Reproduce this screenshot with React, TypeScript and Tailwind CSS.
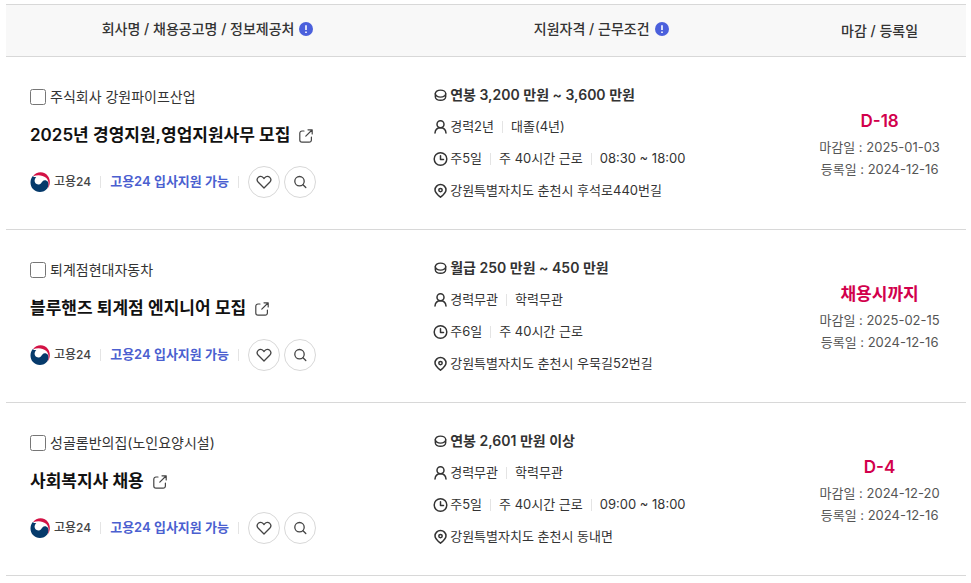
import type { ReactNode } from "react";

type Job = {
  id: string;
  company: string;
  title: string;
  pay: string;
  career: string[];
  hours: string[];
  place: string;
  due: string;
  closes: string;
  posted: string;
};

const jobs: Job[] = [
  {
    id: "job-1",
    company: "주식회사 강원파이프산업",
    title: "2025년 경영지원,영업지원사무 모집",
    pay: "연봉 3,200 만원 ~ 3,600 만원",
    career: ["경력2년", "대졸(4년)"],
    hours: ["주5일", "주 40시간 근로", "08:30 ~ 18:00"],
    place: "강원특별자치도 춘천시 후석로440번길",
    due: "D-18",
    closes: "2025-01-03",
    posted: "2024-12-16",
  },
  {
    id: "job-2",
    company: "퇴계점현대자동차",
    title: "블루핸즈 퇴계점 엔지니어 모집",
    pay: "월급 250 만원 ~ 450 만원",
    career: ["경력무관", "학력무관"],
    hours: ["주6일", "주 40시간 근로"],
    place: "강원특별자치도 춘천시 우묵길52번길",
    due: "채용시까지",
    closes: "2025-02-15",
    posted: "2024-12-16",
  },
  {
    id: "job-3",
    company: "성골롬반의집(노인요양시설)",
    title: "사회복지사 채용",
    pay: "연봉 2,601 만원 이상",
    career: ["경력무관", "학력무관"],
    hours: ["주5일", "주 40시간 근로", "09:00 ~ 18:00"],
    place: "강원특별자치도 춘천시 동내면",
    due: "D-4",
    closes: "2024-12-20",
    posted: "2024-12-16",
  },
];

function Icon({ width, children }: { width: string; children: ReactNode }) {
  return (
    <svg
      viewBox="0 0 16 16"
      className="size-4 shrink-0"
      fill="none"
      stroke="currentColor"
      strokeWidth={width}
      strokeLinecap="round"
      strokeLinejoin="round"
      aria-hidden="true"
    >
      {children}
    </svg>
  );
}

function CoinIcon() {
  return (
    <Icon width="1.4">
      <ellipse cx="7.500" cy="6.600" rx="5.200" ry="3.500" />
      <path d="M2.300 6.800v3c0 2 2.300 3.500 5.200 3.500s5.200-1.500 5.200-3.500v-3" />
    </Icon>
  );
}

function PersonIcon() {
  return (
    <Icon width="1.5">
      <circle cx="7.500" cy="5.200" r="3.500" />
      <path d="M2 14c.3-3.200 2.400-5.200 5.500-5.200s5.200 2 5.500 5.200" />
    </Icon>
  );
}

function ClockIcon() {
  return (
    <Icon width="1.5">
      <circle cx="7.500" cy="8" r="6.300" />
      <path d="M7.500 4.800V8.400h3" />
    </Icon>
  );
}

function PinIcon() {
  return (
    <Icon width="1.5">
      <path d="M7.500 14.200c3-2.400 5.500-4.400 5.500-7.200a5.500 5.500 0 0 0-11 0c0 2.800 2.500 4.800 5.500 7.200Z" />
      <circle cx="7.500" cy="7.100" r="1.700" />
    </Icon>
  );
}

function OpenIcon() {
  return (
    <Icon width="1.2">
      <path d="M6 3H4a2.200 2.200 0 0 0-2.200 2.200V12A2.200 2.200 0 0 0 4 14.200h7.200a2.200 2.200 0 0 0 2.200-2.200V9" />
      <path d="M10 1.800h4.200V6M14 2 7.800 8.200" />
    </Icon>
  );
}

function HeartIcon() {
  return (
    <Icon width="1.3">
      <path d="M8 14 2.300 8.300C.9 6.800.9 4.700 2.200 3.400c1.400-1.400 3.700-1.300 5 .2l.8.900.8-.9c1.300-1.500 3.600-1.600 5-.2 1.300 1.300 1.300 3.400-.1 4.900Z" />
    </Icon>
  );
}

function SearchIcon() {
  return (
    <Icon width="1.3">
      <circle cx="7.500" cy="7.200" r="4.700" />
      <path d="m11 10.700 2.800 2.800" />
    </Icon>
  );
}

function GovMark() {
  return (
    <svg viewBox="0 0 20 20" className="size-5 shrink-0" aria-hidden="true">
      <path
        d="M2.800 4C-.4 7.800-.2 13.600 3 17c4 4.200 10.800 3.800 14.200-.6 1.600-2.200 1.900-4.800.6-6.700-1.400-1.900-4-2-5.400-.3-1.200 1.400-1.800 3.200-4.200 3C5.200 12.100 4 9.800 4.900 7.200c.3-.9.700-1.500 1.400-2.100C5 5.200 3.600 5 2.800 4Z"
        fill="#063a6b"
      />
      <path
        d="M3 4.200C6.400-.9 14.600-1.200 18.200 4.400c2.500 4 2 8.800-.6 12 1.700-4 1.200-8-1.600-10.600C12.600 2.700 7.400 2.500 3 4.200Z"
        fill="#d31245"
      />
    </svg>
  );
}

function InfoButton({ label }: { label: string }) {
  return (
    <button type="button" aria-label={label} className="flex size-[14px] items-center justify-center rounded-full bg-[#4b60dc]">
      <svg viewBox="0 0 14 14" className="size-[14px]" stroke="#fff" strokeWidth="1.6" aria-hidden="true">
        <path d="M7 3.200v4.800M7 9.400V11" />
      </svg>
    </button>
  );
}

function Divider() {
  return <span className="h-3 w-px shrink-0 bg-[#e4e4e4]" />;
}

function Detail({ icon, parts }: { icon: ReactNode; parts: string[] }) {
  return (
    <li className="flex h-8 items-center gap-2 text-[13px]">
      {parts.map((part, i) => (
        <span key={part} className="contents">
          {i > 0 && <Divider />}
          <span className="flex items-center gap-px whitespace-nowrap">
            {i === 0 && icon}
            {part}
          </span>
        </span>
      ))}
    </li>
  );
}

function RoundButton({ label, children }: { label: string; children: ReactNode }) {
  return (
    <button
      type="button"
      aria-label={label}
      className="flex size-8 items-center justify-center rounded-full border border-[#d8d8d8] bg-white text-[#444]"
    >
      {children}
    </button>
  );
}

function JobRow({ job }: { job: Job }) {
  return (
    <tr className="h-[173px]">
      <td className="border-b border-[#d8d8d8] pl-6 align-middle">
        <div className="flex flex-col gap-4">
          <div className="flex h-[18px] items-center gap-1">
            <input id={job.id} type="checkbox" className="size-4" />
            <label htmlFor={job.id} className="text-sm">
              {job.company}
            </label>
          </div>
          <a href="#" className="flex h-7 items-center gap-2 text-[17px] font-semibold text-[#111]">
            {job.title}
            <span className="text-[#444]">
              <OpenIcon />
            </span>
          </a>
          <div className="flex h-8 items-center gap-[9px]">
            <span className="flex items-center gap-1 text-xs font-medium text-[#444]">
              <GovMark />
              고용24
            </span>
            <Divider />
            <span className="text-[13px] font-semibold text-[#4b5fd0]">고용24 입사지원 가능</span>
            <Divider />
            <span className="flex gap-1">
              <RoundButton label="관심 등록">
                <HeartIcon />
              </RoundButton>
              <RoundButton label="상세 보기">
                <SearchIcon />
              </RoundButton>
            </span>
          </div>
        </div>
      </td>
      <td className="border-b border-[#d8d8d8] pl-6 align-middle">
        <ul>
          <li className="flex h-8 items-center gap-px text-sm font-semibold">
            <CoinIcon />
            {job.pay}
          </li>
          <Detail icon={<PersonIcon />} parts={job.career} />
          <Detail icon={<ClockIcon />} parts={job.hours} />
          <Detail icon={<PinIcon />} parts={[job.place]} />
        </ul>
      </td>
      <td className="border-b border-[#d8d8d8] text-center align-middle text-[13px] leading-[22px] text-[#555]">
        <p className="text-[17px] leading-[30px] font-semibold text-[#d2004c]">{job.due}</p>
        <p>마감일 : {job.closes}</p>
        <p>등록일 : {job.posted}</p>
      </td>
    </tr>
  );
}

export default function App() {
  return (
    <main className="bg-white pt-1 pr-[5px] pl-[6px] font-[Inter,'Noto_Sans_CJK_KR',sans-serif] text-[#333]">
      <table className="w-full table-fixed border-separate border-spacing-0">
        <thead>
          <tr className="h-[53px] bg-[#f8f8f8] text-sm">
            <th scope="col" className="w-[42%] border-y border-[#d8d8d8] pb-1 font-medium">
              <span className="flex items-center justify-center gap-[5px]">
                회사명 / 채용공고명 / 정보제공처
                <InfoButton label="정보제공처 안내" />
              </span>
            </th>
            <th scope="col" className="w-[40%] border-y border-[#d8d8d8] pb-1 font-medium">
              <span className="flex items-center justify-center gap-[5px]">
                지원자격 / 근무조건
                <InfoButton label="근무조건 안내" />
              </span>
            </th>
            <th scope="col" className="w-[18%] border-y border-[#d8d8d8] font-medium">
              마감 / 등록일
            </th>
          </tr>
        </thead>
        <tbody>
          {jobs.map((job) => (
            <JobRow key={job.id} job={job} />
          ))}
        </tbody>
      </table>
    </main>
  );
}
